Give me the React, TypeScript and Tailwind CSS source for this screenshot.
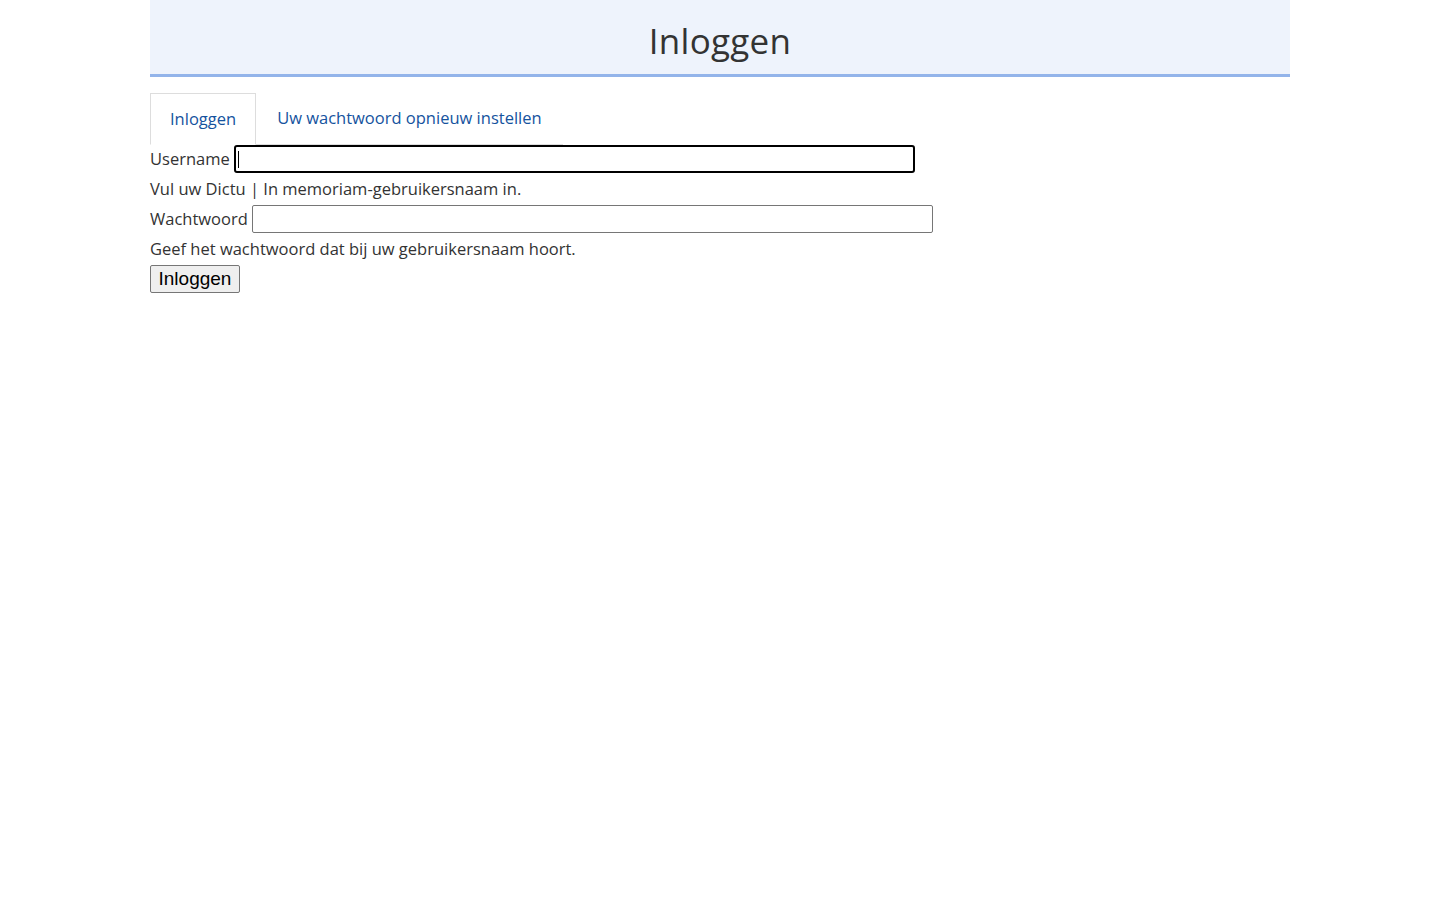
import { useState } from 'react'

export default function App() {
  const [user, setUser] = useState('')
  const [pass, setPass] = useState('')

  return (
    <div className="min-h-screen bg-white text-[#333333]" style={{ fontFamily: '"Open Sans", "Noto Sans", sans-serif' }}>
      <div className="mx-auto w-[1140px]">
        <header className="h-[77px] bg-[#eef3fc] border-b-[3px] border-[#93b4ea] flex items-center justify-center">
          <h1 className="text-[35px] leading-none tracking-[0.3px] text-[#333333] mt-[6px]">Inloggen</h1>
        </header>

        <ul className="mt-4 inline-flex border-b border-[#dddddd] text-[16.5px]">
          <li className="-mb-px border border-[#dddddd] border-b-white bg-white">
            <a href="#" className="block px-[19px] h-[50px] leading-[50px] text-[#15539e]">Inloggen</a>
          </li>
          <li>
            <a href="#" className="block px-[21px] h-[50px] leading-[50px] text-[#15539e]">Uw wachtwoord opnieuw instellen</a>
          </li>
        </ul>

        <form className="text-[16.5px]" onSubmit={(e) => e.preventDefault()}>
          <div className="flex items-center h-[30px] -mt-px">
            <label htmlFor="user" className="mr-1">Username</label>
            <div className="relative">
              <input
                id="user"
                value={user}
                onChange={(e) => setUser(e.target.value)}
                className="w-[681px] h-[28px] border-2 border-black rounded-[3px] outline-none px-1"
              />
              {user === '' && <span className="absolute left-[4px] top-[6px] h-[17px] w-px bg-black" />}
            </div>
          </div>
          <p className="h-[30px] leading-[30px]">Vul uw Dictu | In memoriam-gebruikersnaam in.</p>
          <div className="flex items-center h-[30px]">
            <label htmlFor="pass" className="mr-1">Wachtwoord</label>
            <input
              id="pass"
              type="password"
              value={pass}
              onChange={(e) => setPass(e.target.value)}
              className="w-[681px] h-[28px] border border-[#767676] rounded-[2px] outline-none px-1"
            />
          </div>
          <p className="h-[30px] leading-[30px]">Geef het wachtwoord dat bij uw gebruikersnaam hoort.</p>
          <div className="h-[30px] flex items-center">
            <button
              type="submit"
              className="h-[28px] px-[7.5px] pb-[2px] border border-[#767676] rounded-[2px] bg-[#efefef] text-black text-[19px] leading-none"
              style={{ fontFamily: '"Liberation Sans", Arial, sans-serif' }}
            >
              Inloggen
            </button>
          </div>
        </form>
      </div>
    </div>
  )
}
